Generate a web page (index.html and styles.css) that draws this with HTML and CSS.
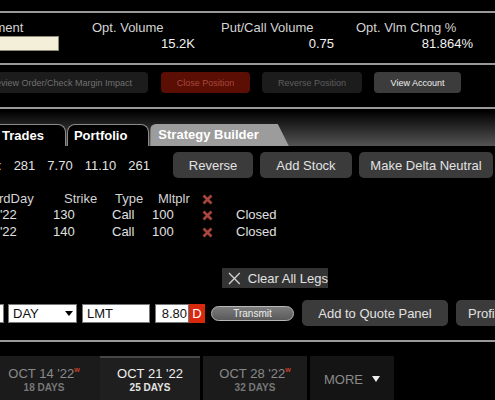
FILE: index.html
```html
<html>
<head>
  <title>Strategy Builder</title>
  <meta name="viewport" content="width=device-width">
  <link rel="stylesheet" href="styles.css">
</head>
<body>

<section class="stats">
  <div class="stat stat-main">
    <span class="stat-label">Instrument</span>
    <span class="stat-input"></span>
  </div>
  <div class="stat stat-opt">
    <span class="stat-label">Opt. Volume</span>
    <span class="stat-value">15.2K</span>
  </div>
  <div class="stat stat-pc">
    <span class="stat-label">Put/Call Volume</span>
    <span class="stat-value">0.75</span>
  </div>
  <div class="stat stat-chg">
    <span class="stat-label">Opt. Vlm Chng %</span>
    <span class="stat-value">81.864%</span>
  </div>
</section>

<section class="actions">
  <button class="act act-preview">Preview Order/Check Margin Impact</button>
  <button class="act act-close">Close Position</button>
  <button class="act act-reverse">Reverse Position</button>
  <button class="act act-account">View Account</button>
</section>

<nav class="tabs">
  <span class="tab tab-trades">Trades</span>
  <span class="tab tab-portfolio">Portfolio</span>
  <span class="tab tab-strategy">Strategy Builder</span>
</nav>

<section class="quote">
  <div class="quote-nums">
    <span class="quote-colon">:</span>
    <span>281</span>
    <span>7.70</span>
    <span>11.10</span>
    <span>261</span>
  </div>
  <button class="qbtn qbtn-reverse">Reverse</button>
  <button class="qbtn qbtn-stock">Add Stock</button>
  <button class="qbtn qbtn-delta">Make Delta Neutral</button>
</section>

<section class="legs">
  <div class="legs-head">
    <span class="legs-day">LastTrdDay</span>
    <span>Strike</span>
    <span>Type</span>
    <span>Mltplr</span>
    <span class="leg-x"><svg width="11" height="11" viewBox="0 0 11 11"><path d="M1.5 1.5l8 8M9.5 1.5l-8 8"/></svg></span>
  </div>
  <div class="leg">
    <span>OCT 21 '22</span>
    <span>130</span>
    <span>Call</span>
    <span>100</span>
    <span class="leg-x"><svg width="11" height="11" viewBox="0 0 11 11"><path d="M1.5 1.5l8 8M9.5 1.5l-8 8"/></svg></span>
    <span>Closed</span>
  </div>
  <div class="leg">
    <span>OCT 21 '22</span>
    <span>140</span>
    <span>Call</span>
    <span>100</span>
    <span class="leg-x"><svg width="11" height="11" viewBox="0 0 11 11"><path d="M1.5 1.5l8 8M9.5 1.5l-8 8"/></svg></span>
    <span>Closed</span>
  </div>
</section>

<button class="clear-legs">
  <svg width="13" height="13" viewBox="0 0 13 13"><path d="M1 1l11 11M12 1l-11 11"/></svg>
  Clear All Legs
</button>

<section class="order">
  <span class="field field-qty"></span>
  <span class="field field-tif">DAY <svg width="8" height="5" viewBox="0 0 8 5"><path d="M0 0h8l-4 5z"/></svg></span>
  <span class="field field-type">LMT</span>
  <span class="field field-price">8.80</span>
  <span class="flag-d">D</span>
  <button class="transmit">Transmit</button>
  <button class="obtn obtn-quote">Add to Quote Panel</button>
  <button class="obtn obtn-profit">Profit/Loss</button>
</section>

<nav class="expiries">
  <div class="expiry expiry-first">
    <div class="expiry-date">OCT 14 '22<sup class="weekly">w</sup></div>
    <div class="expiry-days">18 DAYS</div>
  </div>
  <div class="expiry expiry-active">
    <div class="expiry-date">OCT 21 '22</div>
    <div class="expiry-days">25 DAYS</div>
  </div>
  <div class="expiry expiry-third">
    <div class="expiry-date">OCT 28 '22<sup class="weekly">w</sup></div>
    <div class="expiry-days">32 DAYS</div>
  </div>
  <div class="expiry expiry-more">MORE <svg width="8" height="6" viewBox="0 0 8 6"><path d="M0 0h8l-4 6z"/></svg></div>
</nav>

</body>
</html>
```

FILE: styles.css
```css
* { box-sizing: border-box; }
html, body { margin: 0; padding: 0; }
body { width: 495px; height: 400px; overflow: hidden; padding-top: 11px; background: #000; color: #ddd; font: 13px "Liberation Sans", Arial, sans-serif; white-space: nowrap; }
button { font-family: inherit; border: none; padding: 0; cursor: pointer; }

/* stats */
.stats { display: flex; padding: 7px 0 11px; line-height: 16px; border-top: 2px solid #999; border-bottom: 2px solid #999; }
.stat { display: flex; flex-direction: column; flex-shrink: 0; }
.stat-label { color: #d4d4d4; }
.stat-value { text-align: right; color: #f2f2f2; }
.stat-main { width: 130px; margin-left: -71px; }
.stat-main .stat-label { padding-left: 33px; }
.stat-input { height: 15px; background: #f3efd9; border: 1px solid #8d8a7a; }
.stat-opt { width: 103px; margin-left: 33px; }
.stat-pc { width: 113px; margin-left: 26px; }
.stat-chg { width: 117px; margin-left: 22px; }

/* order actions */
.actions { display: flex; gap: 12px; padding: 7px 0 14px; border-bottom: 2px solid #999; }
.act { flex-shrink: 0; height: 21px; border-radius: 4px; font-size: 9px; background: #1c1c1c; color: #707070; }
.act-preview { width: 177px; margin-left: -29px; margin-right: 1px; }
.act-close { width: 89px; background: #5a0e04; color: #a8483b; }
.act-reverse { width: 100px; color: #5e5e5e; }
.act-account { width: 87px; background: #3c3c3c; color: #f0f0f0; }

/* tabs */
.tabs { display: flex; align-items: flex-end; height: 37px; background: linear-gradient(#000 5%, #545454); }
.tab { flex-shrink: 0; height: 22px; line-height: 22px; padding: 0 21px 0 6px; font-weight: bold; color: #fff; background: #000; border: 1px solid #8a8a8a; border-bottom: none; border-radius: 8px 8px 0 0; }
.tab-trades { margin-left: -20px; padding-left: 21px; margin-right: 1px; }
.tab-portfolio { margin-right: 1px; }
.tab-strategy { padding: 0 30px 0 8px; border: none; background: #9c9c9c; border-radius: 6px 0 0 0; clip-path: polygon(0 0, calc(100% - 11px) 0, 100% 100%, 0 100%); }

/* quote row */
.quote { display: flex; align-items: center; padding-top: 6px; }
.quote-nums { display: flex; gap: 12px; width: 173px; flex-shrink: 0; color: #e2e2e2; }
.quote-colon { margin-left: -2px; }
.qbtn { flex-shrink: 0; height: 26px; margin-right: 7px; border-radius: 5px; font-size: 13px; background: #3b3b3b; color: #e2e2e2; }
.qbtn-reverse { width: 80px; }
.qbtn-stock { width: 92px; }
.qbtn-delta { width: 134px; }

/* legs */
.legs { margin: 13px 0 0 -49px; line-height: 16px; color: #e0e0e0; }
.legs-head { display: grid; grid-template-columns: 113px 51px 43px 44px 20px; color: #d4d4d4; }
.legs-day { padding-left: 16px; }
.leg { display: grid; grid-template-columns: 102px 59px 40px 50px 34px auto; }
.leg + .leg { margin-top: 1px; }
.leg-x { display: flex; align-items: center; }
.leg-x svg { stroke: #a9463c; stroke-width: 2.6; }

.clear-legs { display: flex; align-items: center; gap: 7px; width: 106px; height: 20px; margin: 28px 0 0 222px; padding-left: 6px; font-size: 13px; background: #333; color: #e2e2e2; }
.clear-legs svg { stroke: #cfcfcf; stroke-width: 1.4; }

/* order entry */
.order { display: flex; align-items: center; height: 26px; margin-top: 12px; }
.field { flex-shrink: 0; height: 19px; padding: 0 4px; line-height: 17px; background: #fff; color: #111; border: 1px solid #777; overflow: hidden; }
.field-qty { width: 8px; margin: 0 4px 0 -6px; }
.field-tif { display: flex; align-items: center; justify-content: space-between; width: 69px; margin-right: 5px; padding-right: 3px; }
.field-type { width: 68px; margin-right: 5px; }
.field-price { width: 34px; padding: 0 1px 0 0; text-align: right; }
.flag-d { flex-shrink: 0; width: 16px; height: 19px; line-height: 19px; text-align: center; background: #d8290f; color: #fff; margin-right: 6px; }
.transmit { flex-shrink: 0; width: 83px; height: 15px; margin-right: 8px; border: 1px solid #b8b8b8; border-radius: 8px; font-size: 10px; color: #eee; background: linear-gradient(#7c7c7c, #5a5a5a); }
.obtn { flex-shrink: 0; height: 26px; border-radius: 5px; font-size: 13px; background: #3b3b3b; color: #e2e2e2; }
.obtn-quote { width: 146px; margin-right: 8px; }
.obtn-profit { width: 120px; text-align: left; padding-left: 12px; }

/* expiries */
.expiries { display: flex; height: 44px; margin-top: 14px; border-top: 2px solid #999; padding-top: 14px; box-sizing: content-box; }
.expiry { flex-shrink: 0; width: 100px; padding-top: 8px; text-align: center; background: #1b1b1b; border-top: 2px solid #1b1b1b; color: #8a8a8a; }
.expiry-date { line-height: 16px; font-size: 13px; }
.expiry-days { line-height: 12px; font-size: 10px; font-weight: bold; color: #777; }
.weekly { font-size: 7px; line-height: 0; vertical-align: 6px; color: #c8402c; font-weight: bold; }
.expiry-first { width: 112px; margin-left: -12px; }
.expiry-active { background: #1f1f1f; border-top-color: #474747; color: #f0f0f0; }
.expiry-active .expiry-days { color: #e4e4e4; }
.expiry-third { width: 104px; margin-left: 3px; }
.expiry-more { display: flex; align-items: center; justify-content: center; gap: 9px; width: 84px; margin-left: 3px; padding-top: 0; background: #141414; border-top-color: #141414; }
.expiry-more svg { fill: #eee; }
```
